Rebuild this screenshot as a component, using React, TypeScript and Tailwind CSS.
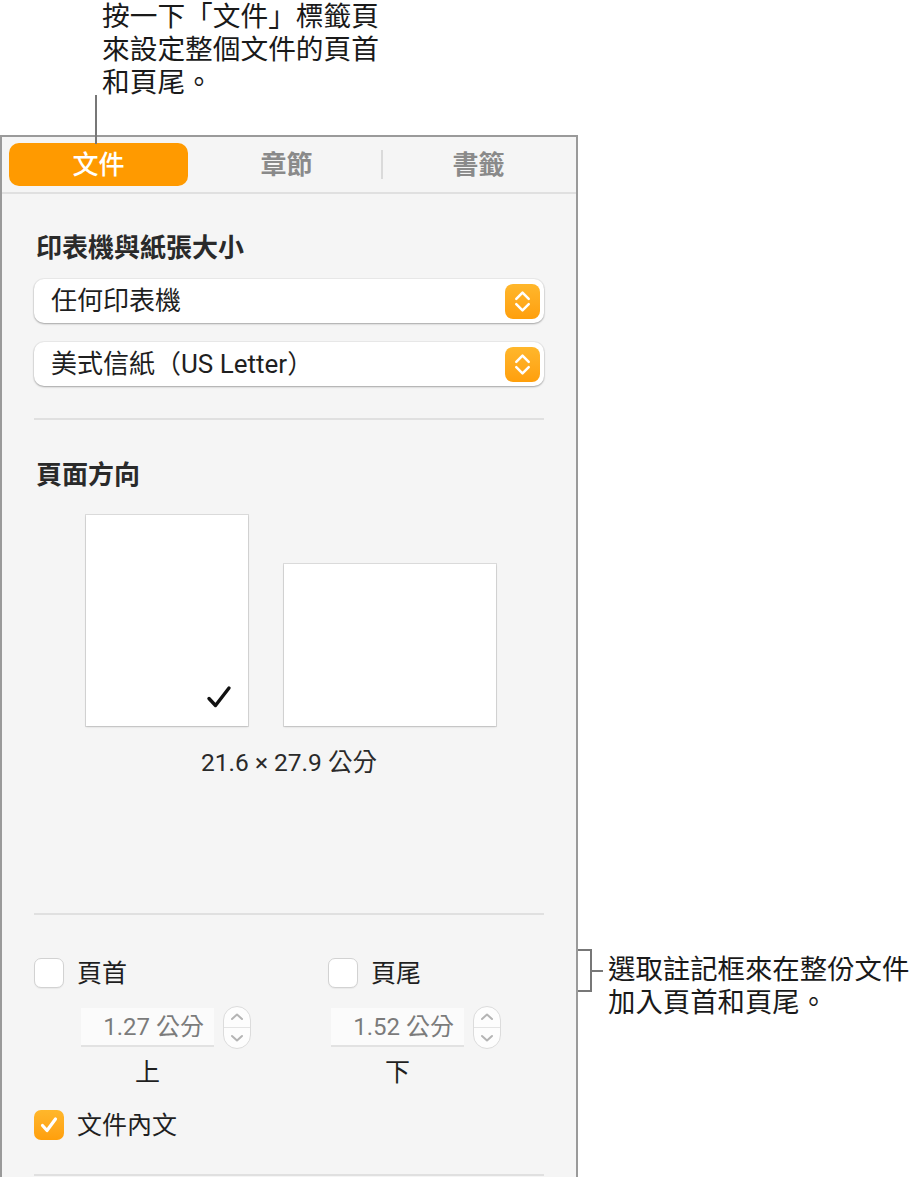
import React from 'react';

const Chevrons: React.FC<{ color: string; size?: number; stroke?: number }> = ({ color, size = 20, stroke = 2.5 }) => (
    <svg width={size} height={size + 6} viewBox="0 0 20 26" fill="none" stroke={color} strokeWidth={stroke} strokeLinecap="round" strokeLinejoin="round">
        <path d="M4 10.5l6-6 6 6" />
        <path d="M4 15.5l6 6 6-6" />
    </svg>
);

const PopupButton: React.FC<{ label: string }> = ({ label }) => (
    <div className="h-[44px] bg-white rounded-[10px] shadow-[0_1px_2px_rgba(0,0,0,0.3),0_0_0_1px_rgba(0,0,0,0.04)] flex items-center justify-between pl-[17px] pr-[4px]">
        <span className="text-[26px] leading-none text-[#1f1f1f]">{label}</span>
        <div className="w-[35px] h-[35px] rounded-[8px] bg-gradient-to-b from-[#ffb72b] to-[#ff9f0a] flex items-center justify-center">
            <Chevrons color="#ffffff" size={21} stroke={2.4} />
        </div>
    </div>
);

const Checkbox: React.FC<{ checked?: boolean }> = ({ checked }) =>
    checked ? (
        <div className="w-[30px] h-[30px] rounded-[7px] bg-gradient-to-b from-[#ffb72b] to-[#ff9f0a] flex items-center justify-center">
            <svg width="20" height="20" viewBox="0 0 20 20" fill="none" stroke="#fff" strokeWidth="3.2" strokeLinecap="round" strokeLinejoin="round">
                <path d="M3.5 10.5l4.5 5L16.5 4" />
            </svg>
        </div>
    ) : (
        <div className="w-[30px] h-[30px] rounded-[7px] bg-white border border-[#d2d2d2] shadow-[0_1px_1px_rgba(0,0,0,0.05)]" />
    );

const NumberField: React.FC<{ value: string }> = ({ value }) => (
    <div className="flex items-center gap-[9px]">
        <div className="w-[133px] h-[39px] bg-[#fbfbfb] border-b-2 border-[#e2e2e2] flex items-center justify-end pr-[10px]">
            <span className="text-[24px] leading-none text-[#7b7b7b]">{value}</span>
        </div>
        <div className="w-[28px] h-[43px] rounded-[14px] bg-[#fdfdfd] border border-[#dcdcdc] flex flex-col items-center">
            <div className="flex-1 w-full flex items-center justify-center border-b border-[#e4e4e4]">
                <svg width="16" height="10" viewBox="0 0 16 10" fill="none" stroke="#b4b4b4" strokeWidth="2" strokeLinecap="round" strokeLinejoin="round"><path d="M3 7l5-4.5L13 7" /></svg>
            </div>
            <div className="flex-1 w-full flex items-center justify-center">
                <svg width="16" height="10" viewBox="0 0 16 10" fill="none" stroke="#b4b4b4" strokeWidth="2" strokeLinecap="round" strokeLinejoin="round"><path d="M3 3l5 4.5L13 3" /></svg>
            </div>
        </div>
    </div>
);

const Divider: React.FC<{ className?: string }> = ({ className = '' }) => (
    <div className={`h-[2px] bg-[#e0e0e0] ${className}`} />
);

export default function App() {
    return (
        <div className="relative w-[916px] h-[1177px] overflow-hidden bg-white text-[#1f1f1f] font-['Roboto','Noto_Sans_CJK_TC',sans-serif]">
            {/* Top callout */}
            <div className="h-[135px] pl-[102px] text-[27.7px] leading-[33px] text-[#1a1a1a]">
                按一下「文件」標籤頁<br />
                來設定整個文件的頁首<br />
                和頁尾。
            </div>
            <div className="absolute left-[95px] top-[95px] w-[2px] h-[49px] bg-[#777] z-10" />

            <div className="flex">
                {/* Inspector panel */}
                <div className="w-[578px] h-[1042px] shrink-0 border-2 border-b-0 border-[#9a9a9a] bg-[#f5f5f5] flex flex-col">
                    {/* Tabs */}
                    <div className="h-[55px] flex items-center pl-[7px]">
                        <div className="w-[179px] h-[43px] rounded-[10px] bg-[#ff9a00] flex items-center justify-center">
                            <span className="text-[26px] leading-none text-white font-medium">文件</span>
                        </div>
                        <div className="w-[193px] flex justify-center pl-[4px]">
                            <span className="text-[26px] leading-none text-[#8a8a8a] font-bold">章節</span>
                        </div>
                        <div className="w-[2px] h-[29px] bg-[#dadada]" />
                        <div className="flex-1 flex justify-center pr-[2px]">
                            <span className="text-[26px] leading-none text-[#8a8a8a] font-bold">書籤</span>
                        </div>
                    </div>
                    <Divider />

                    <div className="px-[32px] flex flex-col">
                        <h2 className="mt-[39px] pl-[2px] text-[26px] leading-[30px] font-bold text-[#2a2a2a]">印表機與紙張大小</h2>
                        <div className="mt-[16px]">
                            <PopupButton label="任何印表機" />
                        </div>
                        <div className="mt-[19px]">
                            <PopupButton label="美式信紙（US Letter）" />
                        </div>
                        <Divider className="mt-[32px]" />

                        <h2 className="mt-[40px] pl-[2px] text-[26px] leading-[30px] font-bold text-[#2a2a2a]">頁面方向</h2>
                        <div className="mt-[25px] flex items-end justify-center gap-[36px] pl-[3px]">
                            <div className="w-[162px] h-[211px] bg-white shadow-[0_0_0_1px_rgba(0,0,0,0.1),0_1px_2px_rgba(0,0,0,0.15)] flex items-end justify-end pr-[16px] pb-[17px]">
                                <svg width="26" height="24" viewBox="0 0 26 24" fill="none" stroke="#111" strokeWidth="3.4" strokeLinecap="round" strokeLinejoin="round">
                                    <path d="M3 13.5l6.5 7L23 3" />
                                </svg>
                            </div>
                            <div className="w-[212px] h-[162px] bg-white shadow-[0_0_0_1px_rgba(0,0,0,0.1),0_1px_2px_rgba(0,0,0,0.15)]" />
                        </div>
                        <p className="mt-[22px] text-center text-[24.5px] leading-[30px] text-[#2a2a2a]">21.6 × 27.9 公分</p>

                        <Divider className="mt-[135px]" />

                        <div className="mt-[43px] grid grid-cols-[294px_1fr]">
                            <div className="flex flex-col">
                                <div className="flex items-center gap-[13px]">
                                    <Checkbox />
                                    <span className="text-[25px] leading-none">頁首</span>
                                </div>
                                <div className="mt-[18px] ml-[47px]">
                                    <NumberField value="1.27 公分" />
                                </div>
                                <div className="mt-[9px] ml-[47px] w-[133px] text-center text-[25px] leading-[30px]">上</div>
                            </div>
                            <div className="flex flex-col">
                                <div className="flex items-center gap-[13px]">
                                    <Checkbox />
                                    <span className="text-[25px] leading-none">頁尾</span>
                                </div>
                                <div className="mt-[18px] ml-[3px]">
                                    <NumberField value="1.52 公分" />
                                </div>
                                <div className="mt-[9px] ml-[3px] w-[133px] text-center text-[25px] leading-[30px]">下</div>
                            </div>
                        </div>

                        <div className="mt-[22px] flex items-center gap-[13px]">
                            <Checkbox checked />
                            <span className="text-[25px] leading-none">文件內文</span>
                        </div>

                        <Divider className="mt-[34px]" />
                    </div>
                </div>

                {/* Right callout */}
                <div className="pt-[814px] flex items-start">
                    <div className="w-[14px] h-[43px] border-t-2 border-r-2 border-b-2 border-[#777]" />
                    <div className="mt-[21px] w-[11px] h-[2px] bg-[#777]" />
                    <div className="ml-[5px] mt-[5px] text-[27.4px] leading-[33px] text-[#1a1a1a] whitespace-nowrap">
                        選取註記框來在整份文件<br />
                        加入頁首和頁尾。
                    </div>
                </div>
            </div>
        </div>
    );
}
